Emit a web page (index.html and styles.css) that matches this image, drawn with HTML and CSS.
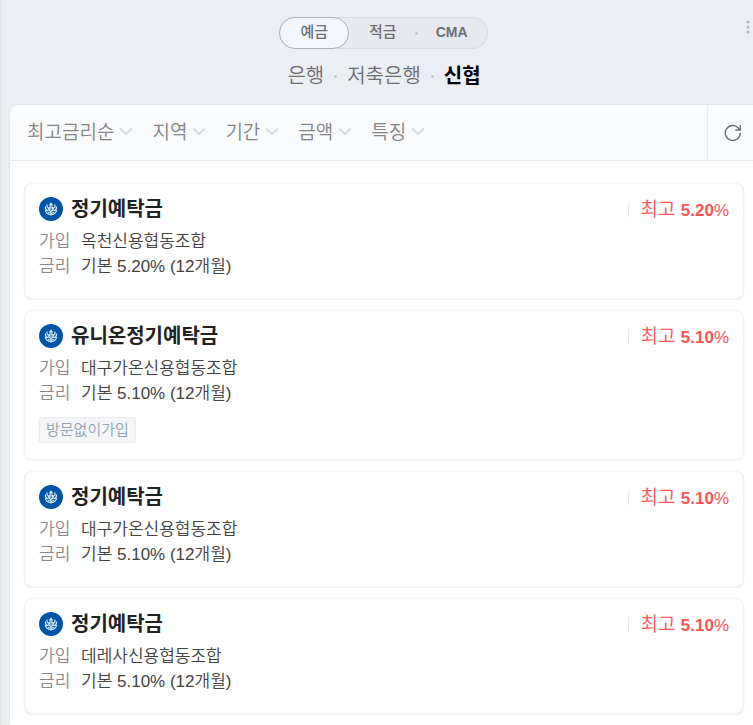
FILE: index.html
```
<!DOCTYPE html>
<html lang="ko">
<head>
<meta charset="utf-8">
<meta name="viewport" content="width=device-width, initial-scale=1">
<title>신협 예금</title>
<link rel="stylesheet" href="styles.css">
</head>
<body>
<svg class="defs" aria-hidden="true">
  <symbol id="chevron" viewBox="0 0 14 9"><path d="M1 1.5l6 5.5 6-5.5" fill="none" stroke="currentColor" stroke-width="2"/></symbol>
  <symbol id="cu" viewBox="0 0 24 24">
    <circle cx="12" cy="12" r="12" fill="#0054a6"/>
    <g fill="none" stroke="#dcebf8" stroke-width="1.2">
      <path d="M12 6v3M10.3 8.5L12 6.3l1.700 2.200M8.300 7.500c-1 2 0 3.500 1.700 4M15.700 7.500c1 2 0 3.500-1.700 4M6.500 9.500c-.3 2.500 1 4 3 4.500M17.500 9.500c.3 2.500-1 4-3 4.500M6.300 13c.5 2.500 2.500 4.500 5.700 5 3.200-.5 5.200-2.500 5.700-5M9 15.500c2 1 4 1 6 0"/>
      <circle cx="12" cy="12" r="2.200"/>
      <path d="M9.500 12h5M12 14v4"/>
    </g>
  </symbol>
</svg>
<div class="page">
  <header class="top">
    <nav class="kinds" aria-label="상품">
      <a class="kind kind-on" href="#">예금</a>
      <a class="kind" href="#">적금</a>
      <span class="dot"></span>
      <a class="kind kind-latin" href="#">CMA</a>
    </nav>
    <button class="more" type="button" aria-label="더보기">
      <svg width="4" height="14" viewBox="0 0 4 14" fill="#b4b7bc"><circle cx="2" cy="2" r="1.6"/><circle cx="2" cy="7" r="1.6"/><circle cx="2" cy="12" r="1.6"/></svg>
    </button>
    <nav class="banks" aria-label="금융기관">
      <a href="#">은행</a><span class="dot"></span>
      <a href="#">저축은행</a><span class="dot"></span>
      <a class="bank-on" href="#">신협</a>
    </nav>
  </header>
  <main class="panel">
    <div class="filters">
      <div class="filter-list">
        <button class="filter" type="button">최고금리순<svg class="chev"><use href="#chevron"/></svg></button>
        <button class="filter" type="button">지역<svg class="chev"><use href="#chevron"/></svg></button>
        <button class="filter" type="button">기간<svg class="chev"><use href="#chevron"/></svg></button>
        <button class="filter" type="button">금액<svg class="chev"><use href="#chevron"/></svg></button>
        <button class="filter" type="button">특징<svg class="chev"><use href="#chevron"/></svg></button>
      </div>
      <button class="reset" type="button" aria-label="초기화">
        <svg width="18" height="18" viewBox="0 0 18 18" fill="none" stroke="#6b6e73" stroke-width="1.4"><path d="M16.3 9a7.5 7.5 0 1 1-1.8-4.900l1.600 1.600M16.300 1v5h-5"/></svg>
      </button>
    </div>
    <ul class="cards">
      <li class="card">
        <div class="head"><svg class="logo"><use href="#cu"/></svg><h2>정기예탁금</h2><p class="best">최고 <span class="rate"><b>5.20</b>%</span></p></div>
        <dl><dt>가입</dt><dd>옥천신용협동조합</dd><dt>금리</dt><dd>기본 5.20% (12개월)</dd></dl>
      </li>
      <li class="card">
        <div class="head"><svg class="logo"><use href="#cu"/></svg><h2>유니온정기예탁금</h2><p class="best">최고 <span class="rate"><b>5.10</b>%</span></p></div>
        <dl><dt>가입</dt><dd>대구가온신용협동조합</dd><dt>금리</dt><dd>기본 5.10% (12개월)</dd></dl>
        <span class="tag">방문없이가입</span>
      </li>
      <li class="card">
        <div class="head"><svg class="logo"><use href="#cu"/></svg><h2>정기예탁금</h2><p class="best">최고 <span class="rate"><b>5.10</b>%</span></p></div>
        <dl><dt>가입</dt><dd>대구가온신용협동조합</dd><dt>금리</dt><dd>기본 5.10% (12개월)</dd></dl>
      </li>
      <li class="card">
        <div class="head"><svg class="logo"><use href="#cu"/></svg><h2>정기예탁금</h2><p class="best">최고 <span class="rate"><b>5.10</b>%</span></p></div>
        <dl><dt>가입</dt><dd>데레사신용협동조합</dd><dt>금리</dt><dd>기본 5.10% (12개월)</dd></dl>
      </li>
    </ul>
  </main>
</div>
</body>
</html>
```
FILE: styles.css
```
* { box-sizing: border-box; }
body {
  margin: 0;
  background: #ebeef3;
  color: #424242;
  font-family: "Liberation Sans", "Noto Sans CJK KR", sans-serif;
  font-weight: 350;
}
a { color: inherit; text-decoration: none; }
button { padding: 0; border: 0; background: none; font: inherit; color: inherit; }
b { font-weight: 700; }
svg { display: block; flex: none; }
.defs { position: absolute; width: 0; height: 0; }
.page {
  display: flex;
  flex-direction: column;
  min-height: 100vh;
  padding-left: 9px;
  border-left: 1px solid #e1e5ea;
}
.top {
  position: relative;
  display: flex;
  flex-direction: column;
  align-items: center;
  padding: 17px 0 13px;
}
.kinds {
  display: flex;
  align-items: center;
  height: 32px;
  margin-right: -4px;
  border-radius: 16px;
  background: #e6e9ed;
  box-shadow: inset 0 0 0 1px #dadde2;
  color: #6b6e76;
  font-size: 15px;
  font-weight: 500;
  line-height: 28px;
}
.kind { padding: 0 20px 2px; }
.kind-on {
  border: 1px solid #adb1b6;
  border-radius: 16px;
  background: #f3f7fc;
}
.kind-latin { font-size: 14px; font-weight: 700; }
.dot { width: 3px; height: 3px; border-radius: 50%; background: #c6cad0; }
.kinds .dot { margin: 0 -2px; }
.more { position: absolute; top: 20px; right: 3px; }
.banks {
  display: flex;
  align-items: center;
  gap: 10px;
  margin-top: 11px;
  margin-right: -5px;
  color: #6b6e76;
  font-size: 20px;
  line-height: 32px;
}
.bank-on { color: #000; font-weight: 700; }
.panel {
  flex: 1;
  border-radius: 8px 0 0 0;
  background: #fff;
  box-shadow: 0 0 2px #cfd5dc;
}
.filters {
  display: flex;
  height: 56px;
  border-bottom: 1px solid #e8ecef;
  border-radius: 8px 0 0 0;
  background: #f9fbfd;
}
.filter-list { flex: 1; display: flex; align-items: center; gap: 19px; padding-left: 17px; }
.filter { display: flex; align-items: center; gap: 5px; color: #858585; font-size: 19px; line-height: 28px; }
.chev { width: 14px; height: 9px; margin-bottom: 2px; color: #d8dade; }
.reset { display: flex; align-items: center; width: 46px; padding-left: 16px; border-left: 1px solid #e8ecef; }
.cards {
  display: flex;
  flex-direction: column;
  gap: 11px;
  margin: 0;
  padding: 22px 9px 8px 14px;
  list-style: none;
}
.card {
  padding: 11px 14px 19px;
  border: 1px solid #f1f2f4;
  border-radius: 8px;
  background: #fff;
  box-shadow: 0 1px 2px #eef0f2;
}
.head { display: flex; align-items: center; height: 28px; }
.logo { width: 24px; height: 24px; }
h2 { flex: 1; margin: 0 0 0 8px; color: #222; font-size: 20px; font-weight: 700; line-height: 28px; }
.best {
  height: 15px;
  margin: 0;
  padding-left: 12px;
  border-left: 1px solid #e9ebef;
  color: #ff5353;
  font-size: 19px;
  line-height: 15px;
}
.rate { font-size: 17px; }
dl {
  display: grid;
  grid-template-columns: 42px 1fr;
  margin: 6px 0 0;
  font-size: 17px;
  line-height: 25px;
}
dt { color: #8a8a8a; }
dd { margin: 0; }
.tag {
  display: inline-block;
  margin: 11px 0 -3px;
  padding: 0 6px;
  border: 1px solid #eaedf0;
  border-radius: 2px;
  background: #f4f6f8;
  color: #94a0b4;
  font-size: 15px;
  line-height: 24px;
  vertical-align: top;
}
```
